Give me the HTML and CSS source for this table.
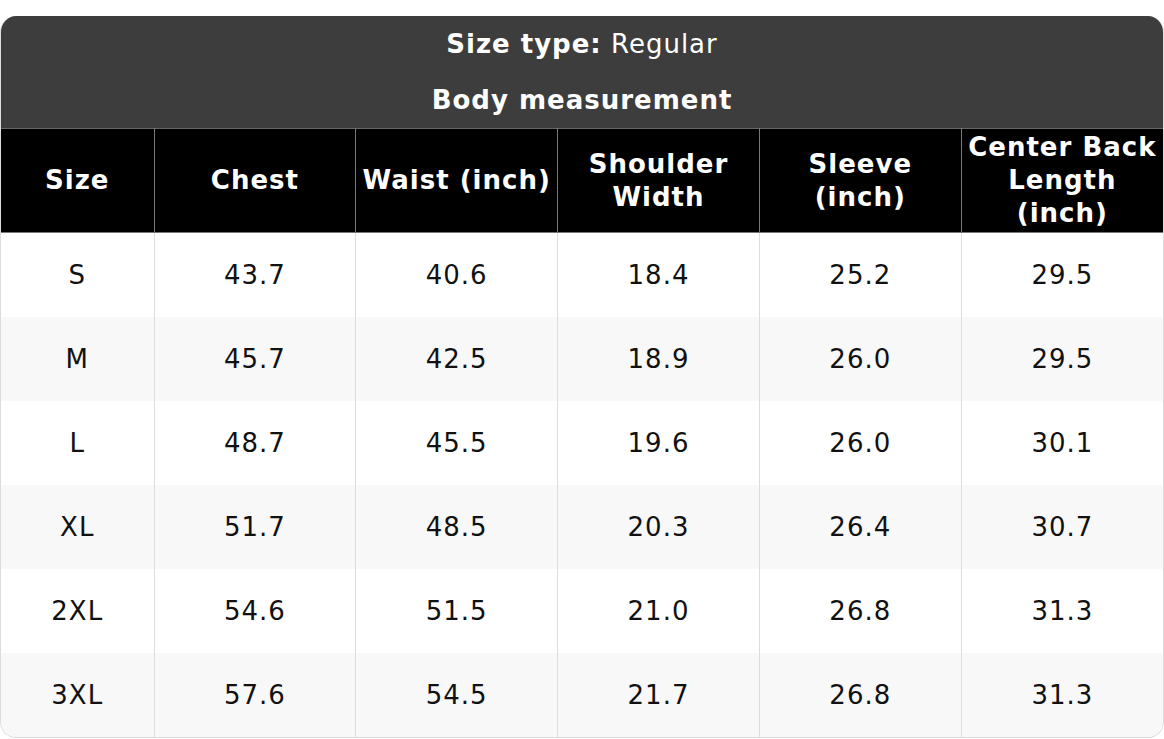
FILE: index.html
```html
<!DOCTYPE html>
<html>
<head>
<meta charset="utf-8">
<link rel="stylesheet" href="styles.css">
</head>
<body>
<div class="chart">
  <div class="caption">
    <div class="cap-line"><b>Size type:</b> Regular</div>
    <div class="cap-line"><b>Body measurement</b></div>
  </div>
  <table class="sizes">
    <colgroup>
      <col class="c1"><col class="c"><col class="c"><col class="c"><col class="c"><col class="c">
    </colgroup>
    <thead>
      <tr>
        <th>Size</th>
        <th>Chest</th>
        <th>Waist (inch)</th>
        <th>Shoulder<br>Width</th>
        <th>Sleeve<br>(inch)</th>
        <th>Center Back<br>Length<br>(inch)</th>
      </tr>
    </thead>
    <tbody>
      <tr><td>S</td><td>43.7</td><td>40.6</td><td>18.4</td><td>25.2</td><td>29.5</td></tr>
      <tr><td>M</td><td>45.7</td><td>42.5</td><td>18.9</td><td>26.0</td><td>29.5</td></tr>
      <tr><td>L</td><td>48.7</td><td>45.5</td><td>19.6</td><td>26.0</td><td>30.1</td></tr>
      <tr><td>XL</td><td>51.7</td><td>48.5</td><td>20.3</td><td>26.4</td><td>30.7</td></tr>
      <tr><td>2XL</td><td>54.6</td><td>51.5</td><td>21.0</td><td>26.8</td><td>31.3</td></tr>
      <tr><td>3XL</td><td>57.6</td><td>54.5</td><td>21.7</td><td>26.8</td><td>31.3</td></tr>
    </tbody>
  </table>
</div>
</body>
</html>
```
FILE: styles.css
```css
html, body {
  margin: 0;
  padding: 0;
  background: #ffffff;
}
body {
  padding-top: 16px;
  font-family: "DejaVu Sans", Verdana, sans-serif;
  font-size: 26px;
  letter-spacing: 1px;
  color: #111111;
}
.chart {
  width: 1164px;
  box-sizing: border-box;
  border: 1px solid #dddddd;
  border-top: none;
  border-radius: 16px;
  overflow: hidden;
}
.caption {
  background: #3d3d3d;
  color: #ffffff;
  text-align: center;
}
.cap-line {
  height: 56px;
  line-height: 56px;
}
.sizes {
  width: 100%;
  border-collapse: collapse;
  table-layout: fixed;
}
.c1 { width: 153px; }
.sizes th {
  background: #000000;
  color: #ffffff;
  font-weight: bold;
  line-height: 33px;
  height: 103px;
  padding: 0;
  border: 1px solid #777777;
  border-top: 1px solid #666666;
}
.sizes th:first-child { border-left: none; }
.sizes th:last-child { border-right: none; }
.sizes td {
  text-align: center;
  height: 84px;
  padding: 0;
  border-left: 1px solid #dddddd;
  border-right: 1px solid #dddddd;
}
.sizes td:first-child { border-left: none; }
.sizes td:last-child { border-right: none; }
.sizes tbody tr:nth-child(even) td { background: #f8f8f8; }
```
